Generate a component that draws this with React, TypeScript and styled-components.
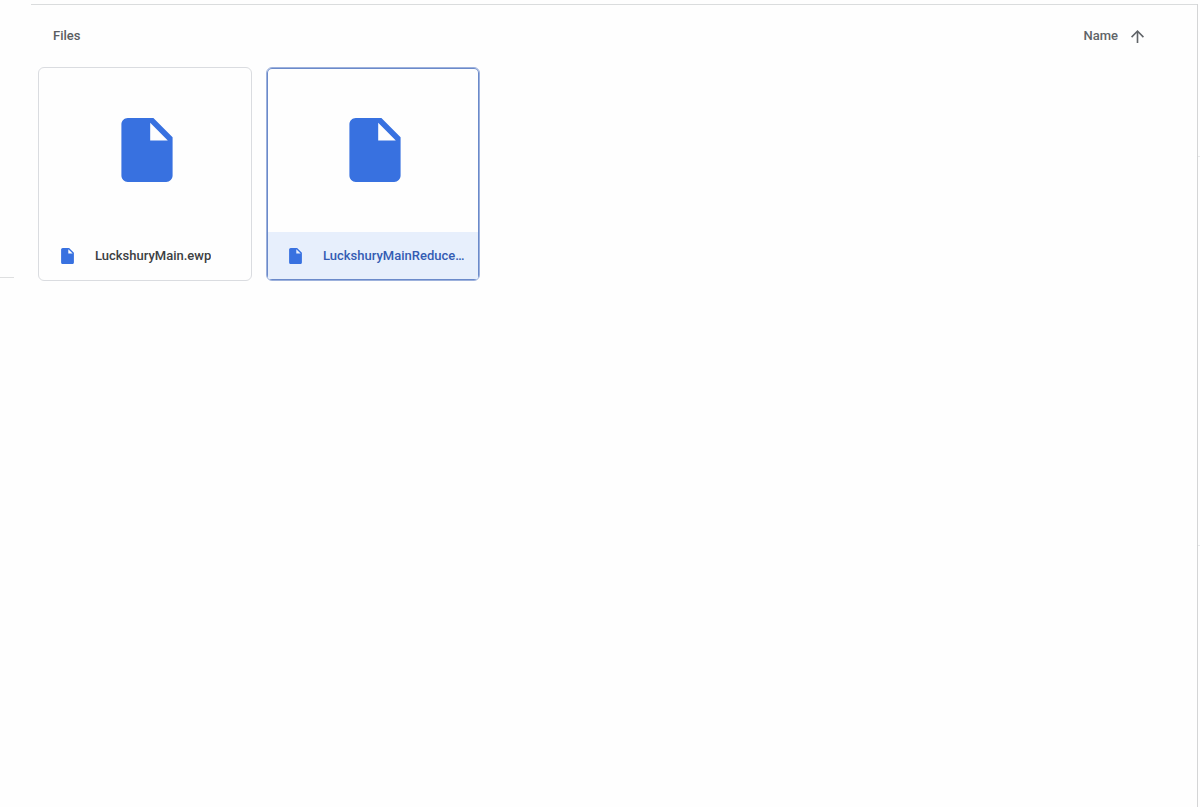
import React, { useState } from "react";
import styled, { createGlobalStyle } from "styled-components";

const GlobalStyle = createGlobalStyle`
  * { box-sizing: border-box; }
  body {
    margin: 0;
    background: #fefefe;
    font-family: Roboto, "Liberation Sans", sans-serif;
    -webkit-font-smoothing: antialiased;
  }
`;

const Page = styled.div`
  display: grid;
  grid-template-columns: 31px minmax(0, 1fr) 3px;
  min-height: 100vh;
  padding-top: 4px;
`;

const NavEdge = styled.aside`
  padding-top: 273px;
`;

const NavDivider = styled.hr`
  width: 14px;
  height: 1px;
  margin: 0;
  border: 0;
  background: #dedfe0;
`;

const Main = styled.main`
  border-top: 1px solid #dadcdd;
`;

const SideEdge = styled.aside`
  border-left: 1px solid #d4d5d6;
  display: flex;
  flex-direction: column;
  gap: 388px;
  padding-top: 152px;
`;

const SideDivider = styled(NavDivider)`
  width: 100%;
  background: #e8e9ea;
`;

const Header = styled.header`
  display: flex;
  align-items: center;
  justify-content: space-between;
  height: 62px;
  padding: 0 53px 0 22px;
`;

const Heading = styled.h2`
  margin: 0;
  color: #5a5d61;
  font-size: 13px;
  font-weight: 500;
  line-height: 22px;
`;

const SortButton = styled.button`
  display: flex;
  align-items: center;
  gap: 13px;
  padding: 0;
  border: 0;
  background: none;
  color: #606468;
  font: 500 13px/20px Roboto, "Liberation Sans", sans-serif;
  cursor: pointer;
`;

const FileGrid = styled.div`
  display: grid;
  grid-template-columns: repeat(auto-fill, 214px);
  gap: 14px;
  padding: 0 7px;
`;

const Card = styled.button<{ $selected: boolean }>`
  display: flex;
  flex-direction: column;
  height: 214px;
  padding: 0;
  overflow: hidden;
  border: 1px solid ${(p) => (p.$selected ? "#9db1dc" : "#dadce0")};
  border-radius: 6px;
  background: #fefefe;
  box-shadow: ${(p) => (p.$selected ? "inset 0 0 0 1px #6b8aca" : "none")};
  color: ${(p) => (p.$selected ? "#345cb3" : "#3c4043")};
  font: 500 13px/20px Roboto, "Liberation Sans", sans-serif;
  text-align: left;
  cursor: pointer;
`;

const Preview = styled.span`
  display: flex;
  flex: 1;
  align-items: center;
  justify-content: center;
  width: 100%;
  padding-left: 4px;
`;

const CardFooter = styled.span<{ $selected: boolean }>`
  display: flex;
  align-items: center;
  gap: 21px;
  width: 100%;
  height: 48px;
  padding: 0 12px 0 22px;
  background: ${(p) => (p.$selected ? "#e7effc" : "transparent")};
  box-shadow: ${(p) =>
    p.$selected
      ? "inset 1px 0 #6b8aca, inset -1px 0 #6b8aca, inset 0 -1px #6b8aca"
      : "none"};
`;

const FileName = styled.span`
  min-width: 0;
  overflow: hidden;
  text-overflow: ellipsis;
  white-space: nowrap;
`;

const IconSvg = styled.svg`
  display: block;
  flex: none;
  fill: #3871e0;
`;

const FileIcon = ({ width, height }: { width: number; height: number }) => (
  <IconSvg width={width} height={height} viewBox="4 2 16 20" aria-hidden="true">
    <path d="M6 2C4.9 2 4 2.9 4 4v16c0 1.1.9 2 2 2h12c1.1 0 2-.9 2-2V8l-6-6H6zm7 7V3.5L18.5 9H13z" />
  </IconSvg>
);

const ArrowUp = () => (
  <svg width="13" height="13" viewBox="4 4 16 16" fill="#606468" aria-hidden="true">
    <path d="M4 12l1.41 1.41L11 7.83V20h2V7.83l5.58 5.59L20 12l-8-8-8 8z" />
  </svg>
);

const files = ["LuckshuryMain.ewp", "LuckshuryMainReduce…"];

export default function App() {
  const [selected, setSelected] = useState(files[1]);
  const [ascending, setAscending] = useState(true);
  const shown = ascending ? files : [...files].reverse();

  return (
    <>
      <GlobalStyle />
      <Page>
        <NavEdge>
          <NavDivider />
        </NavEdge>
        <Main>
          <Header>
            <Heading>Files</Heading>
            <SortButton type="button" onClick={() => setAscending(!ascending)}>
              Name
              <ArrowUp />
            </SortButton>
          </Header>
          <FileGrid>
            {shown.map((name) => (
              <Card
                key={name}
                type="button"
                $selected={name === selected}
                aria-pressed={name === selected}
                onClick={() => setSelected(name)}
              >
                <Preview>
                  <FileIcon width={52} height={64} />
                </Preview>
                <CardFooter $selected={name === selected}>
                  <FileIcon width={13} height={16} />
                  <FileName>{name}</FileName>
                </CardFooter>
              </Card>
            ))}
          </FileGrid>
        </Main>
        <SideEdge>
          <SideDivider />
          <SideDivider />
        </SideEdge>
      </Page>
    </>
  );
}
